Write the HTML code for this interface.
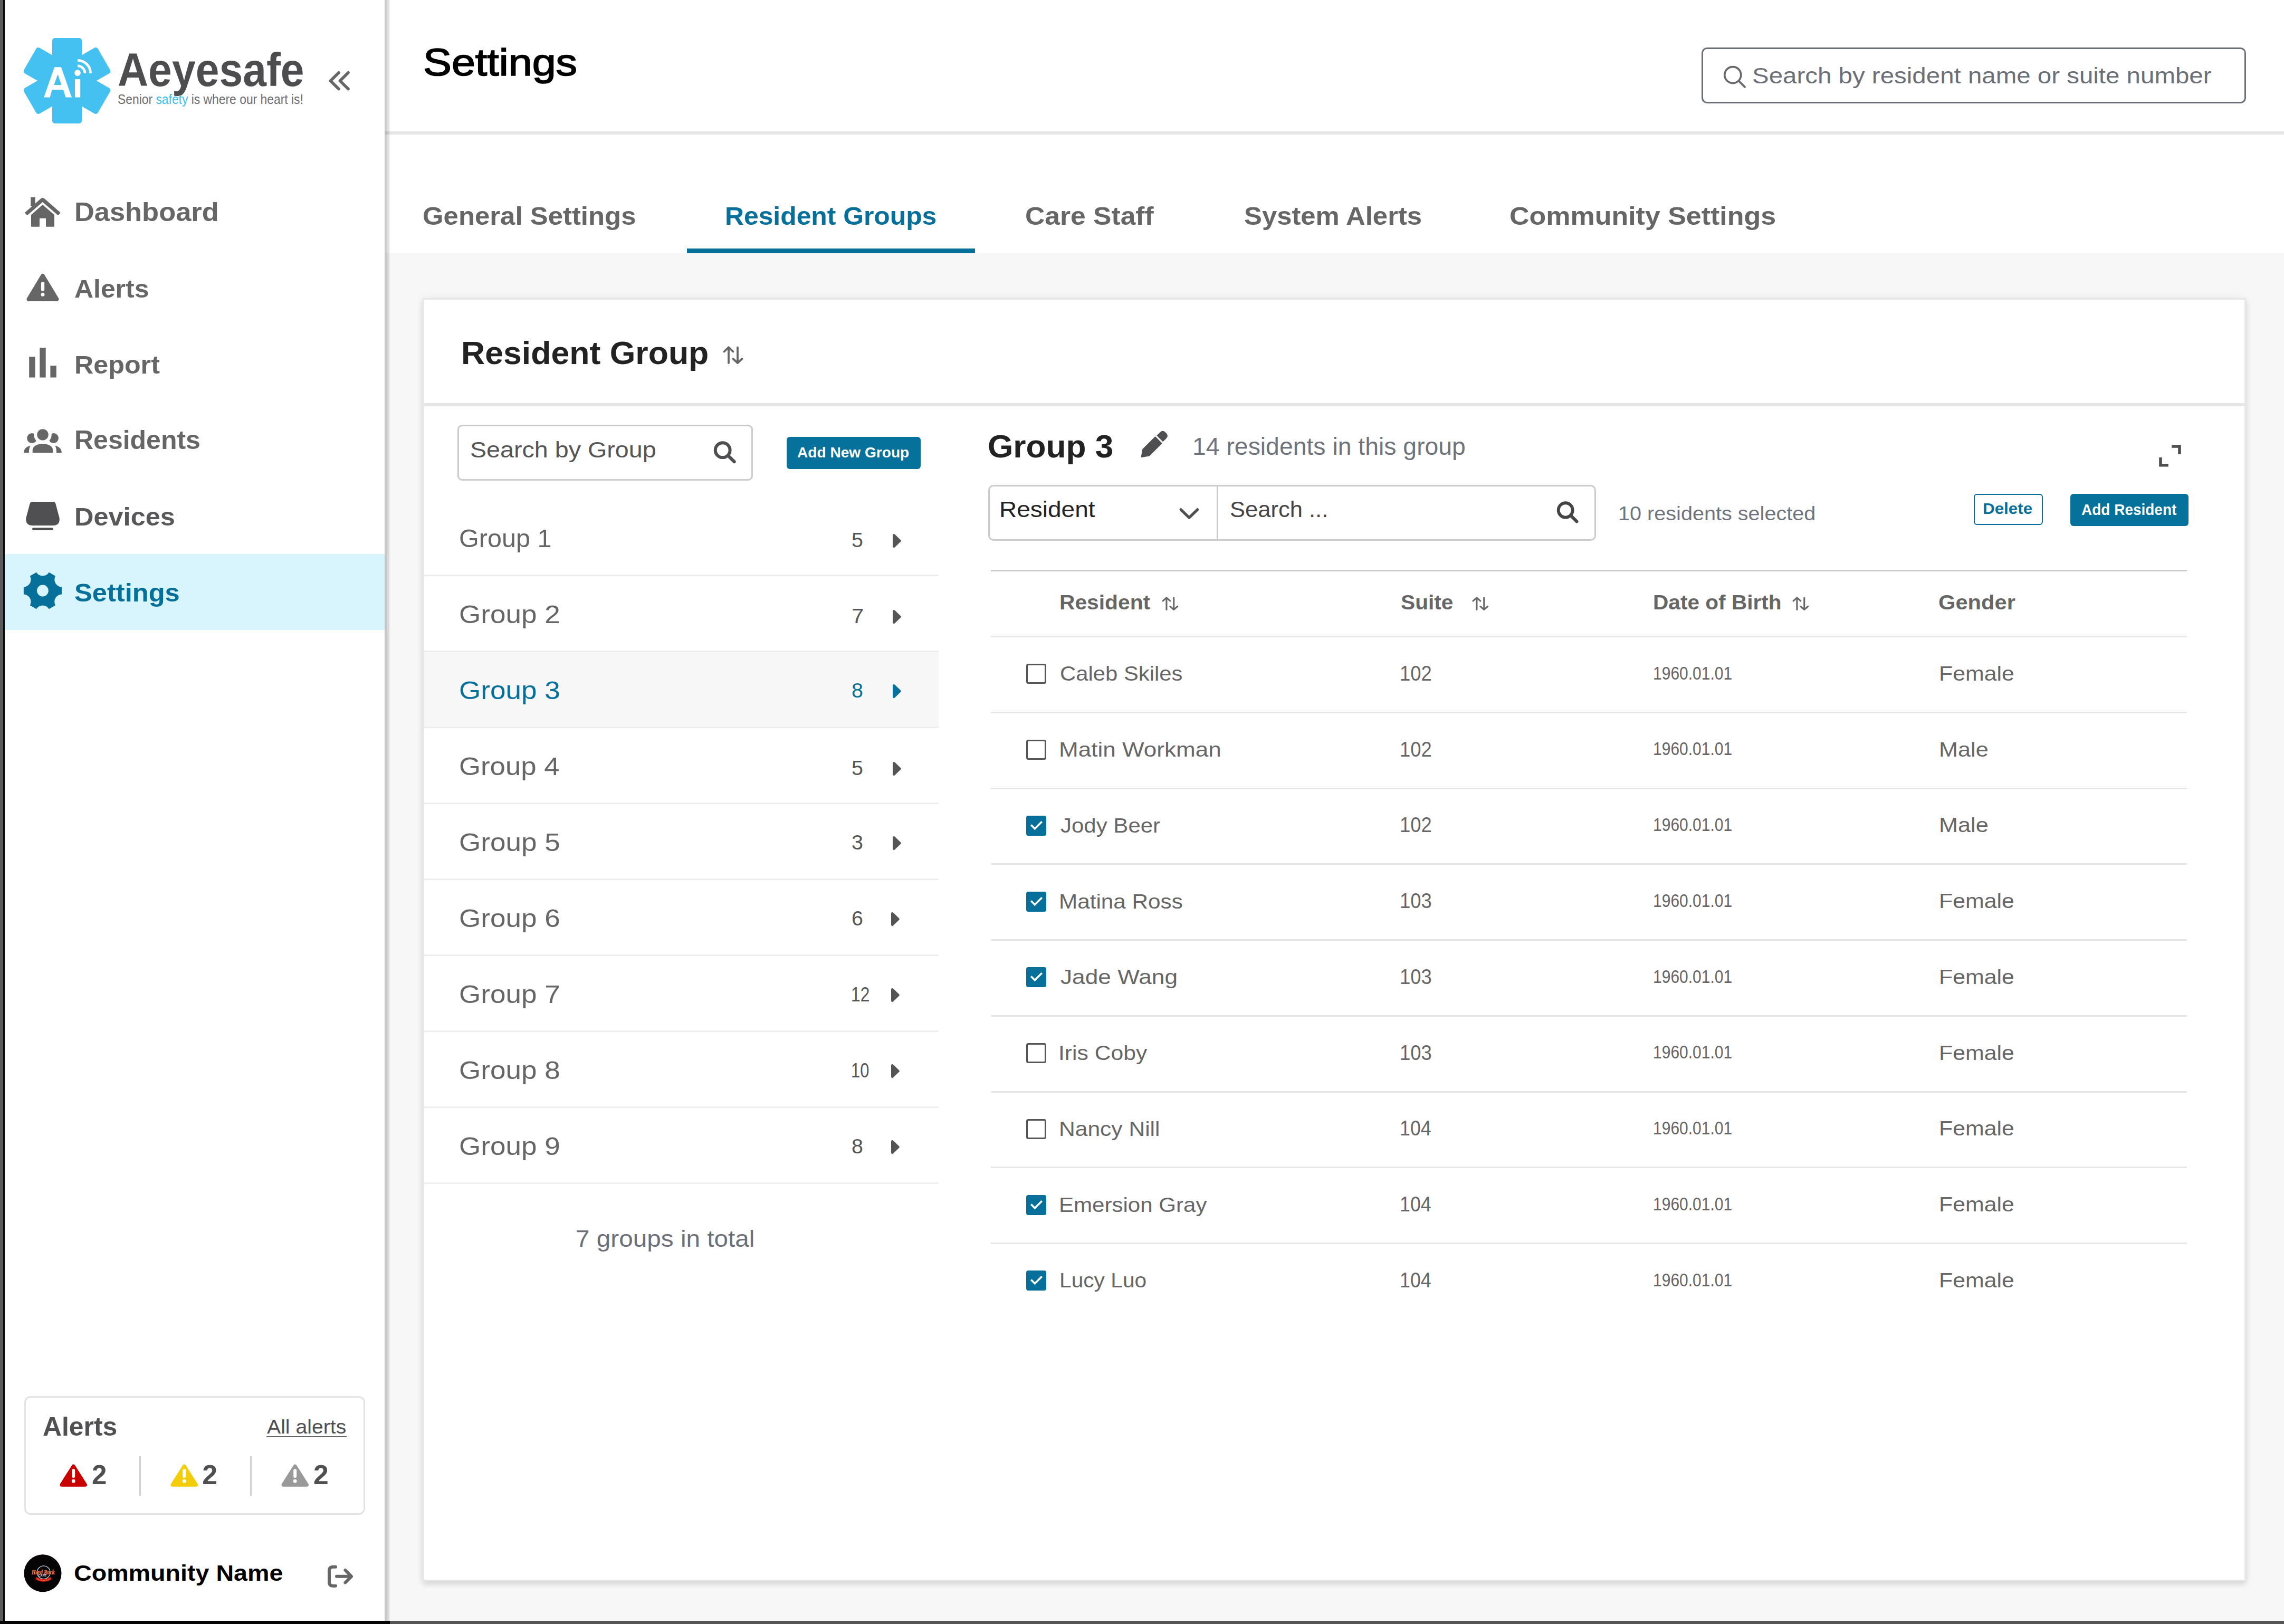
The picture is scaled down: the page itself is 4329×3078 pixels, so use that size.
<!DOCTYPE html><html><head><meta charset="utf-8"><style>
html,body{margin:0;padding:0}body{width:4329px;height:3078px;position:relative;overflow:hidden;background:#f7f7f7;font-family:"Liberation Sans",sans-serif}
.t{position:absolute;white-space:nowrap;transform-origin:0 0}
svg{overflow:visible}
</style></head><body>
<div style="position:absolute;left:729.0px;top:0.0px;width:3600.0px;height:480.0px;background:#fff"></div>
<div style="position:absolute;left:729.0px;top:249.0px;width:3600.0px;height:6.0px;background:#e6e6e6"></div>
<div style="position:absolute;left:9.0px;top:0.0px;width:720.0px;height:3072.0px;background:#fff"></div>
<div style="position:absolute;left:729.0px;top:0.0px;width:12.0px;height:3072.0px;background:linear-gradient(to right,rgba(0,0,0,.2) 0,rgba(0,0,0,.19) 3.5px,rgba(0,0,0,.13) 4.5px,rgba(0,0,0,.12) 7.5px,rgba(0,0,0,.07) 8.5px,rgba(0,0,0,.03) 10px,rgba(0,0,0,0) 12px)"></div>
<div style="position:absolute;left:0.0px;top:0.0px;width:6.0px;height:3078.0px;background:#5a5a5a"></div>
<div style="position:absolute;left:6.0px;top:0.0px;width:3.0px;height:3072.0px;background:#0a0a0a"></div>
<div style="position:absolute;left:0.0px;top:3072.0px;width:739.0px;height:6.0px;background:#050505"></div>
<div style="position:absolute;left:739.0px;top:3072.0px;width:3590.0px;height:6.0px;background:#555"></div>
<div style="position:absolute;left:9.0px;top:1050.0px;width:720.0px;height:144.0px;background:#d8f4fc"></div>
<svg style="position:absolute;left:0;top:0" width="260" height="260" viewBox="0 0 260 260"><g transform="translate(127 153)" fill="#45c1f1"><rect x="-28" y="-81" width="56" height="162" rx="5" transform="rotate(0)"/><rect x="-28" y="-81" width="56" height="162" rx="5" transform="rotate(60)"/><rect x="-28" y="-81" width="56" height="162" rx="5" transform="rotate(120)"/></g><path fill="#fff" fill-rule="evenodd" d="M83.2,184.5 L103.2,127.3 L115.9,127.3 L135.9,184.5 L124.5,184.5 L120,170.3 L98.6,170.3 L94.6,184.5 Z M102.3,161.1 L109.5,140.9 L116.5,161.1 Z"/><rect x="142" y="150.1" width="10.2" height="34.4" fill="#fff"/><circle cx="147" cy="138.1" r="5.9" fill="#fff"/><path d="M147,124.9 A14,14 0 0 1 161,138.9" stroke="#fff" stroke-width="4.7" fill="none"/><path d="M147,114.3 A24.6,24.6 0 0 1 171.6,138.9" stroke="#fff" stroke-width="4.7" fill="none"/></svg>
<svg style="position:absolute;left:615.0px;top:128.0px" width="57.0" height="50.0" viewBox="615 128 57 50"><path d="M642,137.8 L626.4,153.2 L642,168.6 M660,137.8 L644.4,153.2 L660,168.6" stroke="#666" stroke-width="5.6" stroke-linecap="round" stroke-linejoin="round" fill="none"/></svg>
<svg style="position:absolute;left:40.0px;top:365.0px" width="82.0" height="70.0" viewBox="40 365 82 70"><rect x="58.2" y="373.9" width="8.6" height="17" fill="#666"/><path d="M47.6,402.4 L77.3,376.6 Q80.8,373.4 84.3,376.6 L114,402.4 Q114.6,403.2 114,404 L110.8,407.6 Q110,408.2 109.2,407.6 L80.8,383 L52.4,407.6 Q51.6,408.2 50.8,407.6 L47.6,404 Q47,403.2 47.6,402.4 Z" fill="#666"/><path d="M59,407.3 L80.8,388 L103,407.3 L103,428.7 Q103,429.7 102,429.7 L88,429.7 Q87,429.7 87,428.7 L87,414.8 Q87,413.8 86,413.8 L76,413.8 Q75,413.8 75,414.8 L75,428.7 Q75,429.7 74,429.7 L60,429.7 Q59,429.7 59,428.7 Z" fill="#666"/></svg>
<svg style="position:absolute;left:45.0px;top:512.0px" width="73.0" height="64.0" viewBox="45 512 73 64"><path d="M81,523 L107.5,567 L54.5,567 Z" fill="#666" stroke="#666" stroke-width="8" stroke-linejoin="round"/><rect x="77.9" y="534" width="6.3" height="18" rx="3" fill="#fff"/><circle cx="81" cy="558.3" r="3.5" fill="#fff"/></svg>
<svg style="position:absolute;left:50.0px;top:655.0px" width="62.0" height="65.0" viewBox="50 655 62 65"><rect x="55.2" y="676" width="11.4" height="39.5" fill="#666"/><rect x="75.3" y="659" width="11.4" height="56.5" fill="#666"/><rect x="95.4" y="693" width="11.4" height="22.5" fill="#666"/></svg>
<svg style="position:absolute;left:40.0px;top:808.0px" width="82.0" height="54.0" viewBox="40 808 82 54"><circle cx="60.6" cy="830.5" r="9.4" fill="#666"/><circle cx="101.5" cy="830.5" r="9.4" fill="#666"/><circle cx="81" cy="823.9" r="16.8" fill="#fff"/><circle cx="81" cy="823.9" r="10.7" fill="#666"/><path d="M61.7,858 L61.7,853 C61.7,846 70,841.2 81,841.2 C92,841.2 100.3,846 100.3,853 L100.3,858 Z" fill="#666"/><path d="M45.1,858 C45.1,851 50,846.2 57.8,844.8 C55.6,848 55,852 55,858 Z" fill="#666"/><path d="M116.9,858 C116.9,851 112,846.2 104.2,844.8 C106.4,848 107,852 107,858 Z" fill="#666"/></svg>
<svg style="position:absolute;left:45.0px;top:945.0px" width="73.0" height="63.0" viewBox="45 945 73 63"><path d="M62,951 L100.5,951 Q104.5,951 105.5,955 L112.7,982 Q114,996 100,996 L62,996 Q48,996 49.3,982 L56.5,955 Q57.5,951 62,951 Z" fill="#505052"/><rect x="61" y="1000.2" width="40" height="4.5" rx="2.2" fill="#505052"/></svg>
<svg style="position:absolute;left:40.0px;top:1080.0px" width="82.0" height="80.0" viewBox="40 1080 82 80"><path fill-rule="evenodd" fill="#06709a" d="M116.93,1112.50 L116.93,1126.50 A14,14 0 0 0 104.98,1147.20 L92.85,1154.20 A14,14 0 0 0 68.95,1154.20 L56.82,1147.20 A14,14 0 0 0 44.87,1126.50 L44.87,1112.50 A14,14 0 0 0 56.82,1091.80 L68.95,1084.80 A14,14 0 0 0 92.85,1084.80 L104.98,1091.80 A14,14 0 0 0 116.93,1112.50 Z M91.8,1119.5 A10.9,10.9 0 1 0 70,1119.5 A10.9,10.9 0 1 0 91.8,1119.5 Z"/></svg>
<div style="position:absolute;left:45.5px;top:2646.0px;width:646.5px;height:225.0px;box-sizing:border-box;border:3px solid #e3e3e3;border-radius:12px;background:#fff"></div>
<div style="position:absolute;left:264.0px;top:2760.0px;width:3.0px;height:75.0px;background:#cfcfcf"></div>
<div style="position:absolute;left:474.3px;top:2760.0px;width:3.0px;height:75.0px;background:#cfcfcf"></div>
<svg style="position:absolute;left:109.8px;top:2770.8px" width="58.4" height="50.2" viewBox="109.8 2770.8 58.39999999999999 50.19999999999982"><path d="M139.0,2778.8 L161.2,2814 L116.8,2814 Z" fill="#c80000" stroke="#c80000" stroke-width="7" stroke-linejoin="round"/><rect x="136.0" y="2783.8" width="6" height="17" rx="3" fill="#fff"/><circle cx="139.0" cy="2807" r="3.4" fill="#fff"/></svg>
<svg style="position:absolute;left:319.7px;top:2770.8px" width="58.5" height="50.2" viewBox="319.7 2770.8 58.5 50.19999999999982"><path d="M348.95,2778.8 L371.2,2814 L326.7,2814 Z" fill="#f4cd0a" stroke="#f4cd0a" stroke-width="7" stroke-linejoin="round"/><rect x="345.95" y="2783.8" width="6" height="17" rx="3" fill="#fff"/><circle cx="348.95" cy="2807" r="3.4" fill="#fff"/></svg>
<svg style="position:absolute;left:530.0px;top:2770.8px" width="58.4" height="50.2" viewBox="530 2770.8 58.39999999999998 50.19999999999982"><path d="M559.2,2778.8 L581.4,2814 L537,2814 Z" fill="#999" stroke="#999" stroke-width="7" stroke-linejoin="round"/><rect x="556.2" y="2783.8" width="6" height="17" rx="3" fill="#fff"/><circle cx="559.2" cy="2807" r="3.4" fill="#fff"/></svg>
<div style="position:absolute;left:504.7px;top:2721.6px;width:152.2px;height:1.8px;background:#505053"></div>
<svg style="position:absolute;left:44.0px;top:2944.0px" width="76.0" height="76.0" viewBox="44 2944 76 76"><circle cx="81" cy="2981.8" r="35.5" fill="#070405"/><circle cx="82.7" cy="2980.3" r="12.4" fill="none" stroke="#c8d8e0" stroke-width="1.3"/><text x="60" y="2983.5" font-family="Liberation Serif" font-weight="bold" font-style="italic" font-size="13.5" fill="#f6b070" stroke="#d0402a" stroke-width="0.6" textLength="43.5" lengthAdjust="spacingAndGlyphs">Hard Rock</text><text x="72.5" y="2988.3" font-family="Liberation Sans" font-weight="bold" font-size="5.5" fill="#e8eef2" textLength="15.5" lengthAdjust="spacingAndGlyphs">CAFE</text><path d="M68,2991 Q82.5,3000 97,2991" stroke="#e0201a" stroke-width="4.5" fill="none"/><path d="M70,2992.2 Q82.5,2999 95,2992.2" stroke="#f0a030" stroke-width="1" fill="none" stroke-dasharray="1.5 1.5"/></svg>
<svg style="position:absolute;left:615.0px;top:2960.0px" width="60.0" height="55.0" viewBox="615 2960 60 55"><path d="M636,2969.8 L631,2969.8 Q624,2969.8 624,2976.8 L624,2998.8 Q624,3005.8 631,3005.8 L636,3005.8" stroke="#666" stroke-width="6" fill="none" stroke-linecap="round" stroke-linejoin="round"/><path d="M638,2987.8 L665,2987.8 M654.5,2976 L666,2987.8 L654.5,2999.5" stroke="#666" stroke-width="6" fill="none" stroke-linecap="round" stroke-linejoin="round"/></svg>
<div style="position:absolute;left:3225.0px;top:90.1px;width:1032.0px;height:105.9px;box-sizing:border-box;border:3px solid #6b7078;border-radius:10.5px;background:#fff"></div>
<svg style="position:absolute;left:3260.0px;top:118.0px" width="55.0" height="54.0" viewBox="3260 118 55 54"><circle cx="3284.3" cy="142.1" r="15.5" stroke="#67686b" stroke-width="3.6" fill="none"/><path d="M3295.8,153.6 L3307,164.8" stroke="#67686b" stroke-width="3.8" stroke-linecap="round"/></svg>
<div style="position:absolute;left:1302.0px;top:471.0px;width:546.0px;height:8.5px;background:#06709a"></div>
<div style="position:absolute;left:801.0px;top:564.5px;width:3456.0px;height:2432.5px;box-sizing:border-box;border:3px solid #e8e8e8;background:#fff;box-shadow:0 6px 10px rgba(0,0,0,0.11),0 0 16px rgba(0,0,0,0.06)"></div>
<div style="position:absolute;left:804.0px;top:764.0px;width:3450.0px;height:6.0px;background:#e6e6e6"></div>
<svg style="position:absolute;left:1369.5px;top:656.0px" width="37.5" height="34.0" viewBox="1369.5 656 37.5 34"><g transform="translate(1369.5 656) scale(1.0000 1.0000)"><path d="M11,32 V2.5 M2.5,10.5 L11,2.2 L19.5,10.5 M28,2.5 V32 M19.5,24 L28,32 L36.5,24" stroke="#666" stroke-width="3.8" stroke-linecap="round" stroke-linejoin="round" fill="none"/></g></svg>
<div style="position:absolute;left:867.4px;top:804.7px;width:559.8px;height:106.5px;box-sizing:border-box;border:3px solid #cbcbcb;border-radius:9px;background:#fff"></div>
<svg style="position:absolute;left:1353.0px;top:837.0px" width="42.0" height="41.6" viewBox="1353 837 42 41.60000000000002"><g transform="translate(1353 837) scale(1.0000 1.0000)"><circle cx="16.7" cy="16.2" r="13.9" stroke="#4f4f52" stroke-width="6" fill="none"/><path d="M27,26.5 L38.6,38" stroke="#4f4f52" stroke-width="6.2" stroke-linecap="round"/></g></svg>
<div style="position:absolute;left:1491.0px;top:828.0px;width:254.0px;height:61.0px;background:#06719a;border-radius:6px"></div>
<div style="position:absolute;left:804.0px;top:1234.0px;width:975.0px;height:144.0px;background:#f7f7f7"></div>
<div style="position:absolute;left:804.0px;top:1088.5px;width:975.0px;height:3.0px;background:#eeeeee"></div>
<svg style="position:absolute;left:1687.0px;top:1007.6px" width="27.0" height="34.0" viewBox="1687 1007.5999999999999 27 34.0"><path d="M1694.2,1013.8 L1705.6,1024.6 L1694.2,1035.3999999999999 Z" fill="#555" stroke="#555" stroke-width="4.4" stroke-linejoin="round"/></svg>
<div style="position:absolute;left:804.0px;top:1232.5px;width:975.0px;height:3.0px;background:#eeeeee"></div>
<svg style="position:absolute;left:1687.0px;top:1151.6px" width="27.0" height="34.0" viewBox="1687 1151.6 27 34.0"><path d="M1694.2,1157.8 L1705.6,1168.6 L1694.2,1179.3999999999999 Z" fill="#555" stroke="#555" stroke-width="4.4" stroke-linejoin="round"/></svg>
<div style="position:absolute;left:804.0px;top:1376.5px;width:975.0px;height:3.0px;background:#eeeeee"></div>
<svg style="position:absolute;left:1687.0px;top:1292.6px" width="27.0" height="34.0" viewBox="1687 1292.6 27 34.0"><path d="M1694.2,1298.8 L1705.6,1309.6 L1694.2,1320.3999999999999 Z" fill="#06709a" stroke="#06709a" stroke-width="4.4" stroke-linejoin="round"/></svg>
<div style="position:absolute;left:804.0px;top:1520.5px;width:975.0px;height:3.0px;background:#eeeeee"></div>
<svg style="position:absolute;left:1687.0px;top:1439.6px" width="27.0" height="34.0" viewBox="1687 1439.6 27 34.0"><path d="M1694.2,1445.8 L1705.6,1456.6 L1694.2,1467.3999999999999 Z" fill="#555" stroke="#555" stroke-width="4.4" stroke-linejoin="round"/></svg>
<div style="position:absolute;left:804.0px;top:1664.5px;width:975.0px;height:3.0px;background:#eeeeee"></div>
<svg style="position:absolute;left:1687.0px;top:1580.6px" width="27.0" height="34.0" viewBox="1687 1580.6 27 34.0"><path d="M1694.2,1586.8 L1705.6,1597.6 L1694.2,1608.3999999999999 Z" fill="#555" stroke="#555" stroke-width="4.4" stroke-linejoin="round"/></svg>
<div style="position:absolute;left:804.0px;top:1808.5px;width:975.0px;height:3.0px;background:#eeeeee"></div>
<svg style="position:absolute;left:1684.0px;top:1724.6px" width="27.0" height="34.0" viewBox="1684 1724.6 27 34.0"><path d="M1691.2,1730.8 L1702.6,1741.6 L1691.2,1752.3999999999999 Z" fill="#555" stroke="#555" stroke-width="4.4" stroke-linejoin="round"/></svg>
<div style="position:absolute;left:804.0px;top:1952.5px;width:975.0px;height:3.0px;background:#eeeeee"></div>
<svg style="position:absolute;left:1684.0px;top:1868.6px" width="27.0" height="34.0" viewBox="1684 1868.6 27 34.0"><path d="M1691.2,1874.8 L1702.6,1885.6 L1691.2,1896.3999999999999 Z" fill="#555" stroke="#555" stroke-width="4.4" stroke-linejoin="round"/></svg>
<div style="position:absolute;left:804.0px;top:2096.5px;width:975.0px;height:3.0px;background:#eeeeee"></div>
<svg style="position:absolute;left:1684.0px;top:2012.6px" width="27.0" height="34.0" viewBox="1684 2012.6 27 34.0"><path d="M1691.2,2018.8 L1702.6,2029.6 L1691.2,2040.3999999999999 Z" fill="#555" stroke="#555" stroke-width="4.4" stroke-linejoin="round"/></svg>
<div style="position:absolute;left:804.0px;top:2240.5px;width:975.0px;height:3.0px;background:#eeeeee"></div>
<svg style="position:absolute;left:1684.0px;top:2156.6px" width="27.0" height="34.0" viewBox="1684 2156.6 27 34.0"><path d="M1691.2,2162.7999999999997 L1702.6,2173.6 L1691.2,2184.4 Z" fill="#555" stroke="#555" stroke-width="4.4" stroke-linejoin="round"/></svg>
<svg style="position:absolute;left:2155.0px;top:812.0px" width="65.0" height="61.0" viewBox="2155 812 65 61"><g transform="translate(2187 842.8) rotate(-45)"><path d="M-33,0 L-21,-8.3 L12,-8.3 L12,8.3 L-21,8.3 Z" fill="#4f4f52" stroke="#4f4f52" stroke-width="2" stroke-linejoin="round"/><path d="M16,-8.3 L25,-8.3 Q32,-8.3 32,-1.3 L32,1.3 Q32,8.3 25,8.3 L16,8.3 Z" fill="#4f4f52"/></g></svg>
<svg style="position:absolute;left:4085.0px;top:835.0px" width="55.0" height="55.0" viewBox="4085 835 55 55"><path d="M4116.2,843.2 H4133.8 V860.8 H4128.2 V848.8 H4116.2 Z M4092.2,867 H4097.8 V879 H4109.8 V884.6 H4092.2 Z" fill="#4f4f52"/></svg>
<div style="position:absolute;left:1872.6px;top:919.0px;width:1152.4px;height:106.0px;box-sizing:border-box;border:3px solid #cbcbcb;border-radius:10px;background:#fff"></div>
<div style="position:absolute;left:2306.0px;top:921.0px;width:3.0px;height:102.0px;background:#cbcbcb"></div>
<svg style="position:absolute;left:2230.0px;top:955.0px" width="48.0" height="37.0" viewBox="2230 955 48 37"><path d="M2238.2,965.8 L2253.9,981.2 L2269.6,965.8" stroke="#4f4f52" stroke-width="5.2" stroke-linecap="round" stroke-linejoin="round" fill="none"/></svg>
<svg style="position:absolute;left:2951.0px;top:950.8px" width="40.8" height="41.0" viewBox="2951 950.8 40.80000000000018 41.0"><g transform="translate(2951 950.8) scale(0.9714 0.9856)"><circle cx="16.7" cy="16.2" r="13.9" stroke="#444446" stroke-width="6" fill="none"/><path d="M27,26.5 L38.6,38" stroke="#444446" stroke-width="6.2" stroke-linecap="round"/></g></svg>
<div style="position:absolute;left:3741.0px;top:936.0px;width:130.6px;height:59.0px;box-sizing:border-box;border:2.5px solid #06709a;border-radius:6px;background:#fff"></div>
<div style="position:absolute;left:3924.0px;top:936.0px;width:223.5px;height:60.8px;background:#06719a;border-radius:6px"></div>
<div style="position:absolute;left:1878.0px;top:1079.5px;width:2267.0px;height:3.0px;background:#cccccc"></div>
<div style="position:absolute;left:1878.0px;top:1205.0px;width:2267.0px;height:3.0px;background:#e6e6e6"></div>
<div style="position:absolute;left:1878.0px;top:1348.8px;width:2267.0px;height:3.0px;background:#e6e6e6"></div>
<div style="position:absolute;left:1878.0px;top:1492.5px;width:2267.0px;height:3.0px;background:#e6e6e6"></div>
<div style="position:absolute;left:1878.0px;top:1636.2px;width:2267.0px;height:3.0px;background:#e6e6e6"></div>
<div style="position:absolute;left:1878.0px;top:1780.0px;width:2267.0px;height:3.0px;background:#e6e6e6"></div>
<div style="position:absolute;left:1878.0px;top:1923.8px;width:2267.0px;height:3.0px;background:#e6e6e6"></div>
<div style="position:absolute;left:1878.0px;top:2067.5px;width:2267.0px;height:3.0px;background:#e6e6e6"></div>
<div style="position:absolute;left:1878.0px;top:2211.2px;width:2267.0px;height:3.0px;background:#e6e6e6"></div>
<div style="position:absolute;left:1878.0px;top:2355.0px;width:2267.0px;height:3.0px;background:#e6e6e6"></div>
<svg style="position:absolute;left:2202.0px;top:1131.0px" width="30.5" height="26.0" viewBox="2202 1131 30.5 26"><g transform="translate(2202 1131) scale(0.8133 0.7647)"><path d="M11,32 V2.5 M2.5,10.5 L11,2.2 L19.5,10.5 M28,2.5 V32 M19.5,24 L28,32 L36.5,24" stroke="#666" stroke-width="3.8" stroke-linecap="round" stroke-linejoin="round" fill="none"/></g></svg>
<svg style="position:absolute;left:2789.5px;top:1131.0px" width="30.5" height="26.0" viewBox="2789.5 1131 30.5 26"><g transform="translate(2789.5 1131) scale(0.8133 0.7647)"><path d="M11,32 V2.5 M2.5,10.5 L11,2.2 L19.5,10.5 M28,2.5 V32 M19.5,24 L28,32 L36.5,24" stroke="#666" stroke-width="3.8" stroke-linecap="round" stroke-linejoin="round" fill="none"/></g></svg>
<svg style="position:absolute;left:3397.0px;top:1131.0px" width="30.5" height="26.0" viewBox="3397 1131 30.5 26"><g transform="translate(3397 1131) scale(0.8133 0.7647)"><path d="M11,32 V2.5 M2.5,10.5 L11,2.2 L19.5,10.5 M28,2.5 V32 M19.5,24 L28,32 L36.5,24" stroke="#666" stroke-width="3.8" stroke-linecap="round" stroke-linejoin="round" fill="none"/></g></svg>
<div style="position:absolute;left:1945px;top:1258.4px;width:38.3px;height:38px;box-sizing:border-box;border:3.5px solid #555;border-radius:4px;background:#fff"></div>
<div style="position:absolute;left:1945px;top:1402.2px;width:38.3px;height:38px;box-sizing:border-box;border:3.5px solid #555;border-radius:4px;background:#fff"></div>
<div style="position:absolute;left:1945px;top:1545.9px;width:38.3px;height:38px;background:#06709a;border-radius:4px"></div>
<svg style="position:absolute;left:1945.0px;top:1545.9px" width="38.3" height="38.0" viewBox="1945 1545.9 38.299999999999955 38.0"><path d="M1955.5,1564.7 L1961.3,1570.7 L1973.5,1558.4" stroke="#fff" stroke-width="3.6" fill="none" stroke-linecap="square"/></svg>
<div style="position:absolute;left:1945px;top:1689.7px;width:38.3px;height:38px;background:#06709a;border-radius:4px"></div>
<svg style="position:absolute;left:1945.0px;top:1689.7px" width="38.3" height="38.0" viewBox="1945 1689.65 38.299999999999955 38.0"><path d="M1955.5,1708.45 L1961.3,1714.45 L1973.5,1702.15" stroke="#fff" stroke-width="3.6" fill="none" stroke-linecap="square"/></svg>
<div style="position:absolute;left:1945px;top:1833.4px;width:38.3px;height:38px;background:#06709a;border-radius:4px"></div>
<svg style="position:absolute;left:1945.0px;top:1833.4px" width="38.3" height="38.0" viewBox="1945 1833.4 38.299999999999955 38.0"><path d="M1955.5,1852.2 L1961.3,1858.2 L1973.5,1845.9" stroke="#fff" stroke-width="3.6" fill="none" stroke-linecap="square"/></svg>
<div style="position:absolute;left:1945px;top:1977.2px;width:38.3px;height:38px;box-sizing:border-box;border:3.5px solid #555;border-radius:4px;background:#fff"></div>
<div style="position:absolute;left:1945px;top:2120.9px;width:38.3px;height:38px;box-sizing:border-box;border:3.5px solid #555;border-radius:4px;background:#fff"></div>
<div style="position:absolute;left:1945px;top:2264.7px;width:38.3px;height:38px;background:#06709a;border-radius:4px"></div>
<svg style="position:absolute;left:1945.0px;top:2264.7px" width="38.3" height="38.0" viewBox="1945 2264.65 38.299999999999955 38.0"><path d="M1955.5,2283.4500000000003 L1961.3,2289.4500000000003 L1973.5,2277.15" stroke="#fff" stroke-width="3.6" fill="none" stroke-linecap="square"/></svg>
<div style="position:absolute;left:1945px;top:2408.4px;width:38.3px;height:38px;background:#06709a;border-radius:4px"></div>
<svg style="position:absolute;left:1945.0px;top:2408.4px" width="38.3" height="38.0" viewBox="1945 2408.4 38.299999999999955 38.0"><path d="M1955.5,2427.2000000000003 L1961.3,2433.2000000000003 L1973.5,2420.9" stroke="#fff" stroke-width="3.6" fill="none" stroke-linecap="square"/></svg>
<div class="t" style="left:222.5px;top:88.2px;font-size:89.83px;line-height:89.83px;font-weight:bold;color:#4d4d50;transform:scaleX(0.8959);">Aeyesafe</div>
<div class="t" style="left:222.7px;top:177.2px;font-size:24.85px;line-height:24.85px;font-weight:normal;color:#6d6e71;transform:scaleX(0.9198);">Senior <span style="color:#3ebded">safety</span> is where our heart is!</div>
<div class="t" style="left:140.5px;top:378.4px;font-size:49.56px;line-height:49.56px;font-weight:bold;color:#666;transform:scaleX(1.0575);">Dashboard</div>
<div class="t" style="left:141.3px;top:523.0px;font-size:48.69px;line-height:48.69px;font-weight:bold;color:#666;transform:scaleX(1.0244);">Alerts</div>
<div class="t" style="left:140.6px;top:667.2px;font-size:48.40px;line-height:48.40px;font-weight:bold;color:#666;transform:scaleX(1.0382);">Report</div>
<div class="t" style="left:140.7px;top:810.4px;font-size:49.56px;line-height:49.56px;font-weight:bold;color:#666;transform:scaleX(1.0086);">Residents</div>
<div class="t" style="left:140.7px;top:954.7px;font-size:48.69px;line-height:48.69px;font-weight:bold;color:#58585a;transform:scaleX(1.0369);">Devices</div>
<div class="t" style="left:141.3px;top:1098.5px;font-size:48.69px;line-height:48.69px;font-weight:bold;color:#06709a;transform:scaleX(1.0399);">Settings</div>
<div class="t" style="left:81.2px;top:2678.9px;font-size:50.00px;line-height:50.00px;font-weight:bold;color:#505053;transform:scaleX(0.9971);">Alerts</div>
<div class="t" style="left:506.0px;top:2687.3px;font-size:36.05px;line-height:36.05px;font-weight:normal;color:#505053;transform:scaleX(1.0876);">All alerts</div>
<div class="t" style="left:173.9px;top:2770.0px;font-size:51.89px;line-height:51.89px;font-weight:bold;color:#505053;transform:scaleX(0.9840);">2</div>
<div class="t" style="left:383.3px;top:2770.0px;font-size:51.89px;line-height:51.89px;font-weight:bold;color:#505053;transform:scaleX(1.0000);">2</div>
<div class="t" style="left:593.7px;top:2770.0px;font-size:51.89px;line-height:51.89px;font-weight:bold;color:#505053;transform:scaleX(0.9960);">2</div>
<div class="t" style="left:140.0px;top:2960.9px;font-size:42.15px;line-height:42.15px;font-weight:bold;color:#000;transform:scaleX(1.1065);">Community Name</div>
<div class="t" style="left:802.1px;top:82.6px;font-size:71.80px;line-height:71.80px;font-weight:normal;color:#000;transform:scaleX(1.1256);-webkit-text-stroke:1.7px #000">Settings</div>
<div class="t" style="left:3321.3px;top:121.6px;font-size:43.17px;line-height:43.17px;font-weight:normal;color:#6b7078;transform:scaleX(1.0997);">Search by resident name or suite number</div>
<div class="t" style="left:800.7px;top:384.6px;font-size:48.69px;line-height:48.69px;font-weight:bold;color:#666;transform:scaleX(1.0454);">General Settings</div>
<div class="t" style="left:1374.1px;top:384.6px;font-size:48.69px;line-height:48.69px;font-weight:bold;color:#06709a;transform:scaleX(1.0230);">Resident Groups</div>
<div class="t" style="left:1942.6px;top:384.6px;font-size:48.69px;line-height:48.69px;font-weight:bold;color:#666;transform:scaleX(1.0596);">Care Staff</div>
<div class="t" style="left:2357.6px;top:384.6px;font-size:48.69px;line-height:48.69px;font-weight:bold;color:#666;transform:scaleX(1.0439);">System Alerts</div>
<div class="t" style="left:2861.4px;top:384.6px;font-size:48.69px;line-height:48.69px;font-weight:bold;color:#666;transform:scaleX(1.0672);">Community Settings</div>
<div class="t" style="left:873.8px;top:637.8px;font-size:61.77px;line-height:61.77px;font-weight:bold;color:#222;transform:scaleX(1.0131);">Resident Group</div>
<div class="t" style="left:890.8px;top:830.7px;font-size:42.73px;line-height:42.73px;font-weight:normal;color:#555;transform:scaleX(1.0918);">Search by Group</div>
<div class="t" style="left:1511.1px;top:844.4px;font-size:27.62px;line-height:27.62px;font-weight:bold;color:#fff;transform:scaleX(1.0174);">Add New Group</div>
<div class="t" style="left:870.0px;top:997.2px;font-size:47.97px;line-height:47.97px;font-weight:normal;color:#666;transform:scaleX(1.0118);">Group 1</div>
<div class="t" style="left:1613.9px;top:1005.8px;font-size:37.94px;line-height:37.94px;font-weight:normal;color:#555;transform:scaleX(1.0389);">5</div>
<div class="t" style="left:869.8px;top:1141.2px;font-size:47.97px;line-height:47.97px;font-weight:normal;color:#666;transform:scaleX(1.1065);">Group 2</div>
<div class="t" style="left:1613.8px;top:1149.8px;font-size:37.94px;line-height:37.94px;font-weight:normal;color:#555;transform:scaleX(1.1000);">7</div>
<div class="t" style="left:869.8px;top:1285.2px;font-size:47.97px;line-height:47.97px;font-weight:normal;color:#06709a;transform:scaleX(1.1065);">Group 3</div>
<div class="t" style="left:1613.9px;top:1290.8px;font-size:37.94px;line-height:37.94px;font-weight:normal;color:#06709a;transform:scaleX(1.0389);">8</div>
<div class="t" style="left:869.8px;top:1429.2px;font-size:47.97px;line-height:47.97px;font-weight:normal;color:#666;transform:scaleX(1.1000);">Group 4</div>
<div class="t" style="left:1613.9px;top:1437.8px;font-size:37.94px;line-height:37.94px;font-weight:normal;color:#555;transform:scaleX(1.0389);">5</div>
<div class="t" style="left:869.8px;top:1573.2px;font-size:47.97px;line-height:47.97px;font-weight:normal;color:#666;transform:scaleX(1.1065);">Group 5</div>
<div class="t" style="left:1613.9px;top:1578.8px;font-size:37.94px;line-height:37.94px;font-weight:normal;color:#555;transform:scaleX(1.0389);">3</div>
<div class="t" style="left:869.8px;top:1717.2px;font-size:47.97px;line-height:47.97px;font-weight:normal;color:#666;transform:scaleX(1.1065);">Group 6</div>
<div class="t" style="left:1613.9px;top:1722.8px;font-size:37.94px;line-height:37.94px;font-weight:normal;color:#555;transform:scaleX(1.0389);">6</div>
<div class="t" style="left:869.8px;top:1861.2px;font-size:47.97px;line-height:47.97px;font-weight:normal;color:#666;transform:scaleX(1.1065);">Group 7</div>
<div class="t" style="left:1612.7px;top:1866.8px;font-size:37.94px;line-height:37.94px;font-weight:normal;color:#555;transform:scaleX(0.8378);">12</div>
<div class="t" style="left:869.8px;top:2005.2px;font-size:47.97px;line-height:47.97px;font-weight:normal;color:#666;transform:scaleX(1.1065);">Group 8</div>
<div class="t" style="left:1612.8px;top:2010.8px;font-size:37.94px;line-height:37.94px;font-weight:normal;color:#555;transform:scaleX(0.8158);">10</div>
<div class="t" style="left:869.8px;top:2149.2px;font-size:47.97px;line-height:47.97px;font-weight:normal;color:#666;transform:scaleX(1.1065);">Group 9</div>
<div class="t" style="left:1613.9px;top:2154.8px;font-size:37.94px;line-height:37.94px;font-weight:normal;color:#555;transform:scaleX(1.0389);">8</div>
<div class="t" style="left:1091.2px;top:2327.0px;font-size:43.46px;line-height:43.46px;font-weight:normal;color:#6b7078;transform:scaleX(1.0977);">7 groups in total</div>
<div class="t" style="left:1872.0px;top:815.7px;font-size:60.61px;line-height:60.61px;font-weight:bold;color:#222;transform:scaleX(1.0259);">Group 3</div>
<div class="t" style="left:2259.5px;top:823.7px;font-size:45.78px;line-height:45.78px;font-weight:normal;color:#6f747c;transform:scaleX(1.0128);">14 residents in this group</div>
<div class="t" style="left:1894.4px;top:945.3px;font-size:42.15px;line-height:42.15px;font-weight:normal;color:#222;transform:scaleX(1.0914);">Resident</div>
<div class="t" style="left:2330.5px;top:945.3px;font-size:42.15px;line-height:42.15px;font-weight:normal;color:#444;transform:scaleX(1.0326);">Search ...</div>
<div class="t" style="left:3067.0px;top:954.7px;font-size:37.50px;line-height:37.50px;font-weight:normal;color:#6f747c;transform:scaleX(1.0562);">10 residents selected</div>
<div class="t" style="left:3757.7px;top:949.4px;font-size:30.09px;line-height:30.09px;font-weight:bold;color:#06709a;transform:scaleX(1.0425);">Delete</div>
<div class="t" style="left:3944.6px;top:951.6px;font-size:28.63px;line-height:28.63px;font-weight:bold;color:#fff;transform:scaleX(0.9776);">Add Resident</div>
<div class="t" style="left:2007.9px;top:1121.9px;font-size:39.10px;line-height:39.10px;font-weight:bold;color:#666;transform:scaleX(1.0432);">Resident</div>
<div class="t" style="left:2654.5px;top:1121.9px;font-size:39.10px;line-height:39.10px;font-weight:bold;color:#666;transform:scaleX(1.0409);">Suite</div>
<div class="t" style="left:3132.9px;top:1121.9px;font-size:39.10px;line-height:39.10px;font-weight:bold;color:#666;transform:scaleX(1.0393);">Date of Birth</div>
<div class="t" style="left:3673.7px;top:1121.9px;font-size:39.10px;line-height:39.10px;font-weight:bold;color:#666;transform:scaleX(1.0664);">Gender</div>
<div class="t" style="left:2008.5px;top:1258.3px;font-size:38.23px;line-height:38.23px;font-weight:normal;color:#666;transform:scaleX(1.0943);">Caleb Skiles</div>
<div class="t" style="left:2653.2px;top:1256.7px;font-size:40.26px;line-height:40.26px;font-weight:normal;color:#666;transform:scaleX(0.9032);">102</div>
<div class="t" style="left:3133.1px;top:1258.5px;font-size:34.74px;line-height:34.74px;font-weight:normal;color:#666;transform:scaleX(0.8639);">1960.01.01</div>
<div class="t" style="left:3674.6px;top:1257.9px;font-size:38.81px;line-height:38.81px;font-weight:normal;color:#666;transform:scaleX(1.1048);">Female</div>
<div class="t" style="left:2007.2px;top:1402.1px;font-size:38.23px;line-height:38.23px;font-weight:normal;color:#666;transform:scaleX(1.1527);">Matin Workman</div>
<div class="t" style="left:2653.2px;top:1400.5px;font-size:40.26px;line-height:40.26px;font-weight:normal;color:#666;transform:scaleX(0.9032);">102</div>
<div class="t" style="left:3133.1px;top:1402.2px;font-size:34.74px;line-height:34.74px;font-weight:normal;color:#666;transform:scaleX(0.8639);">1960.01.01</div>
<div class="t" style="left:3674.6px;top:1401.7px;font-size:38.81px;line-height:38.81px;font-weight:normal;color:#666;transform:scaleX(1.1139);">Male</div>
<div class="t" style="left:2009.6px;top:1545.8px;font-size:38.23px;line-height:38.23px;font-weight:normal;color:#666;transform:scaleX(1.0988);">Jody Beer</div>
<div class="t" style="left:2653.2px;top:1544.2px;font-size:40.26px;line-height:40.26px;font-weight:normal;color:#666;transform:scaleX(0.9032);">102</div>
<div class="t" style="left:3133.1px;top:1546.0px;font-size:34.74px;line-height:34.74px;font-weight:normal;color:#666;transform:scaleX(0.8639);">1960.01.01</div>
<div class="t" style="left:3674.6px;top:1545.4px;font-size:38.81px;line-height:38.81px;font-weight:normal;color:#666;transform:scaleX(1.1139);">Male</div>
<div class="t" style="left:2007.4px;top:1689.6px;font-size:38.23px;line-height:38.23px;font-weight:normal;color:#666;transform:scaleX(1.1058);">Matina Ross</div>
<div class="t" style="left:2653.2px;top:1688.0px;font-size:40.26px;line-height:40.26px;font-weight:normal;color:#666;transform:scaleX(0.9032);">103</div>
<div class="t" style="left:3133.1px;top:1689.7px;font-size:34.74px;line-height:34.74px;font-weight:normal;color:#666;transform:scaleX(0.8639);">1960.01.01</div>
<div class="t" style="left:3674.6px;top:1689.2px;font-size:38.81px;line-height:38.81px;font-weight:normal;color:#666;transform:scaleX(1.1048);">Female</div>
<div class="t" style="left:2009.5px;top:1833.3px;font-size:38.23px;line-height:38.23px;font-weight:normal;color:#666;transform:scaleX(1.1566);">Jade Wang</div>
<div class="t" style="left:2653.2px;top:1831.7px;font-size:40.26px;line-height:40.26px;font-weight:normal;color:#666;transform:scaleX(0.9032);">103</div>
<div class="t" style="left:3133.1px;top:1833.5px;font-size:34.74px;line-height:34.74px;font-weight:normal;color:#666;transform:scaleX(0.8639);">1960.01.01</div>
<div class="t" style="left:3674.6px;top:1832.9px;font-size:38.81px;line-height:38.81px;font-weight:normal;color:#666;transform:scaleX(1.1048);">Female</div>
<div class="t" style="left:2006.2px;top:1977.1px;font-size:38.23px;line-height:38.23px;font-weight:normal;color:#666;transform:scaleX(1.1163);">Iris Coby</div>
<div class="t" style="left:2653.2px;top:1975.5px;font-size:40.26px;line-height:40.26px;font-weight:normal;color:#666;transform:scaleX(0.9032);">103</div>
<div class="t" style="left:3133.1px;top:1977.2px;font-size:34.74px;line-height:34.74px;font-weight:normal;color:#666;transform:scaleX(0.8639);">1960.01.01</div>
<div class="t" style="left:3674.6px;top:1976.7px;font-size:38.81px;line-height:38.81px;font-weight:normal;color:#666;transform:scaleX(1.1048);">Female</div>
<div class="t" style="left:2007.4px;top:2120.8px;font-size:38.23px;line-height:38.23px;font-weight:normal;color:#666;transform:scaleX(1.1132);">Nancy Nill</div>
<div class="t" style="left:2653.2px;top:2119.2px;font-size:40.26px;line-height:40.26px;font-weight:normal;color:#666;transform:scaleX(0.8889);">104</div>
<div class="t" style="left:3133.1px;top:2121.0px;font-size:34.74px;line-height:34.74px;font-weight:normal;color:#666;transform:scaleX(0.8639);">1960.01.01</div>
<div class="t" style="left:3674.6px;top:2120.4px;font-size:38.81px;line-height:38.81px;font-weight:normal;color:#666;transform:scaleX(1.1048);">Female</div>
<div class="t" style="left:2007.4px;top:2264.6px;font-size:38.23px;line-height:38.23px;font-weight:normal;color:#666;transform:scaleX(1.1004);">Emersion Gray</div>
<div class="t" style="left:2653.2px;top:2263.0px;font-size:40.26px;line-height:40.26px;font-weight:normal;color:#666;transform:scaleX(0.8889);">104</div>
<div class="t" style="left:3133.1px;top:2264.7px;font-size:34.74px;line-height:34.74px;font-weight:normal;color:#666;transform:scaleX(0.8639);">1960.01.01</div>
<div class="t" style="left:3674.6px;top:2264.2px;font-size:38.81px;line-height:38.81px;font-weight:normal;color:#666;transform:scaleX(1.1048);">Female</div>
<div class="t" style="left:2007.5px;top:2408.3px;font-size:38.23px;line-height:38.23px;font-weight:normal;color:#666;transform:scaleX(1.0649);">Lucy Luo</div>
<div class="t" style="left:2653.2px;top:2406.7px;font-size:40.26px;line-height:40.26px;font-weight:normal;color:#666;transform:scaleX(0.8889);">104</div>
<div class="t" style="left:3133.1px;top:2408.5px;font-size:34.74px;line-height:34.74px;font-weight:normal;color:#666;transform:scaleX(0.8639);">1960.01.01</div>
<div class="t" style="left:3674.6px;top:2407.9px;font-size:38.81px;line-height:38.81px;font-weight:normal;color:#666;transform:scaleX(1.1048);">Female</div>
</body></html>
